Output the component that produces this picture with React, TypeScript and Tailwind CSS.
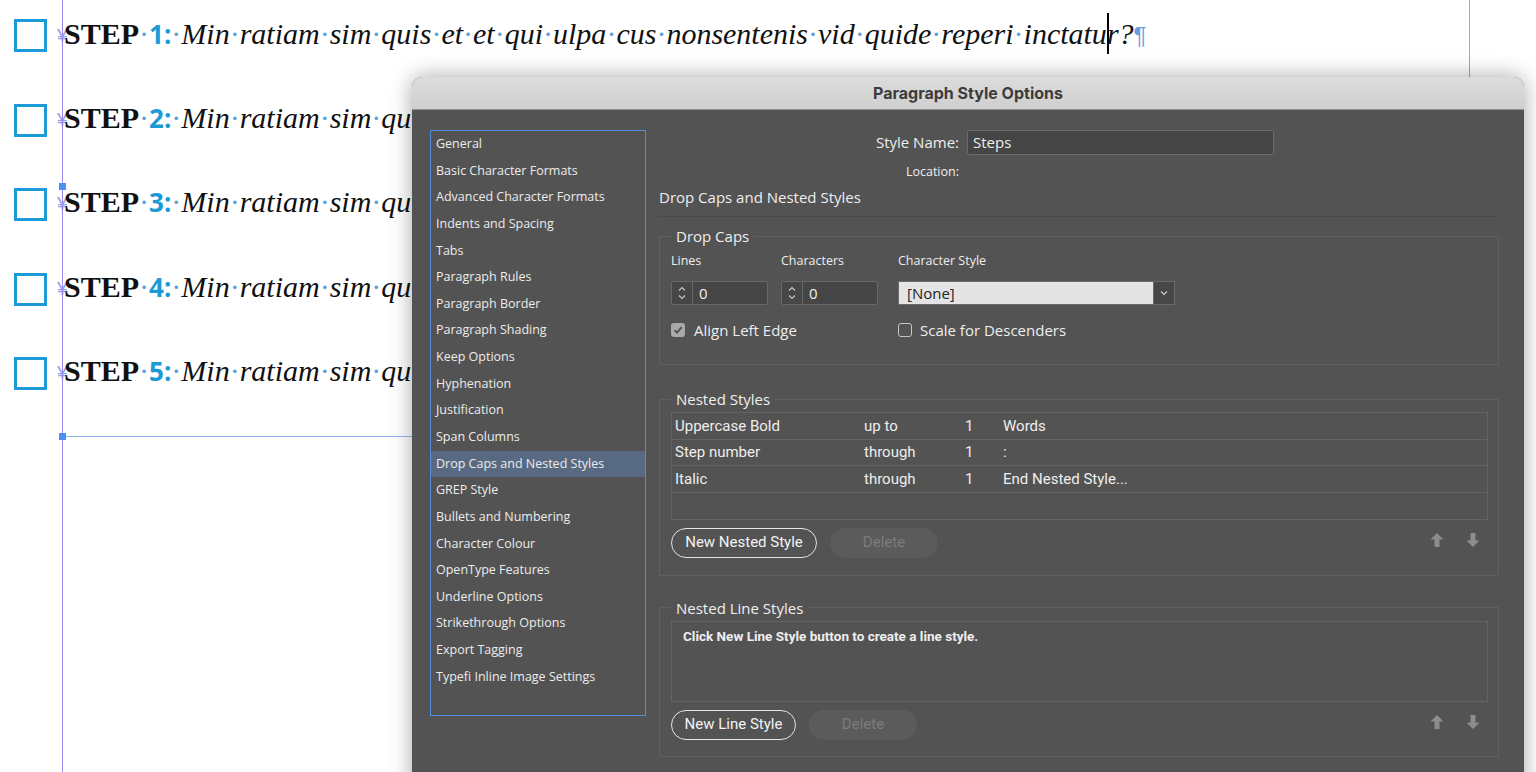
import React from "react"

const sections = [
  "General",
  "Basic Character Formats",
  "Advanced Character Formats",
  "Indents and Spacing",
  "Tabs",
  "Paragraph Rules",
  "Paragraph Border",
  "Paragraph Shading",
  "Keep Options",
  "Hyphenation",
  "Justification",
  "Span Columns",
  "Drop Caps and Nested Styles",
  "GREP Style",
  "Bullets and Numbering",
  "Character Colour",
  "OpenType Features",
  "Underline Options",
  "Strikethrough Options",
  "Export Tagging",
  "Typefi Inline Image Settings",
]

const nestedStyles = [
  { style: "Uppercase Bold", mode: "up to", count: "1", until: "Words" },
  { style: "Step number", mode: "through", count: "1", until: ":" },
  { style: "Italic", mode: "through", count: "1", until: "End Nested Style..." },
]

const words = "Min ratiam sim quis et et qui ulpa cus nonsentenis vid quide reperi".split(" ")

function Dot() {
  return <span className="font-normal not-italic text-[#5b9fdc]">·</span>
}

// rows under the dialog only show their first words
function StepRow({ n, full }: { n: number; full?: boolean }) {
  const shown = full ? words : words.slice(0, 3)
  return (
    <div className="flex items-center h-[40px]">
      <div className="ml-[14px] mt-[3px] w-[33px] h-[33px] border-[3px] border-[#1d9ad8] shrink-0" />
      <div className="ml-[10px] whitespace-nowrap font-['Liberation_Serif',serif] text-[30px] leading-[40px] text-[#111]">
        <span className="inline-block w-[7px] overflow-visible font-['Liberation_Sans',sans-serif] text-[19px] text-[#8d9fe6] align-[2px]">¥</span>
        <span className="font-bold">STEP</span>
        <Dot />
        <span className="font-['Open_Sans',sans-serif] font-bold text-[26px] text-[#1b9ad6]">{n}:</span>
        <Dot />
        <span className="italic">
          {shown.map((w, i) => (
            <React.Fragment key={i}>
              {w}
              <Dot />
            </React.Fragment>
          ))}
          {full ? (
            <>
              inctatu
              <span className="inline-block w-[2px] h-[41px] -mr-[2px] bg-black align-[-10px]" />
              r?
            </>
          ) : (
            "quis"
          )}
        </span>
        {full && <span className="font-['Liberation_Sans',sans-serif] text-[24px] text-[#6d9be0]">¶</span>}
      </div>
    </div>
  )
}

function Group({ title, className, children }: { title: string; className?: string; children: React.ReactNode }) {
  return (
    <fieldset className={`border border-[#5f5f5f] pl-[11px] pr-[10px] ${className ?? ""}`}>
      <legend className="px-[5px] text-[15px] leading-[20px] text-[#efefef]">{title}</legend>
      {children}
    </fieldset>
  )
}

function Spinner() {
  return (
    <div className="flex w-[97px] h-[24px] border border-[#686868] bg-[#464646] rounded-[2px]">
      <div className="w-[21px] flex items-center justify-center border-r border-[#686868]">
        <svg width="10" height="18" viewBox="0 0 10 18" fill="none" stroke="#c4c4c4" strokeWidth="1.2">
          <path d="M2 6.5 L5 3.5 L8 6.5" />
          <path d="M2 11.5 L5 14.5 L8 11.5" />
        </svg>
      </div>
      <div className="pl-[6px] text-[15px] leading-[22px] text-[#f0f0f0]">0</div>
    </div>
  )
}

function Arrows() {
  return (
    <div className="ml-auto mt-[5px] mr-[8px] flex gap-[22px]">
      <svg width="14" height="14" viewBox="0 0 14 14" fill="#8d8d8d">
        <polygon points="7,0 13.5,6.5 9.5,6.5 9.5,14 4.5,14 4.5,6.5 0.5,6.5" />
      </svg>
      <svg width="14" height="14" viewBox="0 0 14 14" fill="#8d8d8d">
        <polygon points="7,14 13.5,7.5 9.5,7.5 9.5,0 4.5,0 4.5,7.5 0.5,7.5" />
      </svg>
    </div>
  )
}

function PillButtons({ label, width }: { label: string; width: string }) {
  return (
    <div className="flex items-start mt-[8px]">
      <button className={`${width} h-[30px] rounded-full border-[1.5px] border-[#e4e4e4] text-[15px] text-[#f2f2f2] font-['Roboto',sans-serif]`}>
        {label}
      </button>
      <button className="ml-[13px] w-[108px] h-[30px] rounded-full bg-[#5b5b5b] text-[15px] text-[#7c7c7c] font-['Roboto',sans-serif]">
        Delete
      </button>
      <Arrows />
    </div>
  )
}

export default function App() {
  return (
    <div className="relative w-[1536px] h-[772px] overflow-hidden bg-white">
      {/* document page */}
      <div className="flex flex-col pt-[14px] gap-[44.5px]">
        {[1, 2, 3, 4, 5].map((n) => (
          <StepRow key={n} n={n} full={n === 1} />
        ))}
      </div>

      {/* guides */}
      <div className="absolute left-[62px] top-0 w-px h-full bg-[#9a86f0]" />
      <div className="absolute left-[1469px] top-0 w-px h-full bg-[#a898f2]" />
      <div className="absolute left-[62px] top-[436px] w-[1407px] h-px bg-[#8fb6f5]" />
      <div className="absolute left-[59px] top-[183px] w-[7px] h-[7px] bg-[#4f8ff2]" />
      <div className="absolute left-[59px] top-[433px] w-[7px] h-[7px] bg-[#4f8ff2]" />

      {/* dialog */}
      <div className="absolute left-[412px] top-[77px] w-[1112px] h-[720px] rounded-t-[10px] bg-[#535353] shadow-[0_0_22px_rgba(0,0,0,0.35)] font-['Open_Sans',sans-serif]">
        <div className="h-[33px] rounded-t-[10px] bg-gradient-to-b from-[#dcdcdc] to-[#cfcfcf] border-b border-[#8e8e8e] flex items-center justify-center">
          <span className="font-['Inter',sans-serif] font-bold text-[16px] text-[#3c3c3c]">Paragraph Style Options</span>
        </div>

        <div className="flex pl-[18px] pt-[20px] gap-[13px]">
          {/* section list */}
          <div className="w-[216px] h-[586px] border border-[#4d8fdc] shrink-0">
            {sections.map((s) => (
              <div
                key={s}
                className={`h-[26.65px] pl-[5px] flex items-center text-[12.5px] text-[#ececec] ${
                  s === "Drop Caps and Nested Styles" ? "bg-[#586a82]" : ""
                }`}
              >
                {s}
              </div>
            ))}
          </div>

          {/* options panel */}
          <div className="w-[840px] flex flex-col text-[#eeeeee]">
            <div className="flex items-center h-[25px]">
              <div className="w-[300px] text-right text-[15px]">Style Name:</div>
              <div className="ml-[8px] w-[307px] h-[25px] border border-[#6b6b6b] bg-[#454545] rounded-[2px] pl-[5px] text-[15px] leading-[23px]">
                Steps
              </div>
            </div>
            <div className="flex items-center h-[20px] mt-[7px]">
              <div className="w-[300px] text-right text-[12.5px]">Location:</div>
            </div>
            <div className="h-[20px] mt-[5px] text-[15px] leading-[20px]">Drop Caps and Nested Styles</div>
            <div className="h-px mt-[9px] bg-[#4a4a4a]" />

            <Group title="Drop Caps" className="mt-[9px] pb-[24px]">
              <div className="flex mt-[7px] h-[16px] items-center text-[12.5px]">
                <div className="w-[110px]">Lines</div>
                <div className="w-[117px]">Characters</div>
                <div>Character Style</div>
              </div>
              <div className="flex mt-[12px]">
                <Spinner />
                <div className="ml-[13px]">
                  <Spinner />
                </div>
                <div className="ml-[20px] flex w-[277px] h-[24px] border border-[#6b6b6b]">
                  <div className="flex-1 bg-[#e4e4e4] pl-[8px] text-[15px] leading-[22px] text-[#222]">[None]</div>
                  <div className="w-[21px] bg-[#474747] flex items-center justify-center border-l border-[#6b6b6b]">
                    <svg width="10" height="8" viewBox="0 0 10 8" fill="none" stroke="#cfcfcf" strokeWidth="1.2">
                      <path d="M2 2.5 L5 5.5 L8 2.5" />
                    </svg>
                  </div>
                </div>
              </div>
              <div className="flex mt-[15px] h-[20px] items-center text-[15px]">
                <div className="w-[227px] flex items-center">
                  <div className="w-[14px] h-[14px] rounded-[3px] bg-[#a9a9a9] flex items-center justify-center">
                    <svg width="10" height="10" viewBox="0 0 10 10" fill="none" stroke="#505050" strokeWidth="1.8">
                      <path d="M1.5 5.2 L4 7.6 L8.6 2.2" />
                    </svg>
                  </div>
                  <span className="ml-[9px]">Align Left Edge</span>
                </div>
                <div className="flex items-center">
                  <div className="w-[14px] h-[14px] rounded-[3px] border border-[#c6c6c6]" />
                  <span className="ml-[8px]">Scale for Descenders</span>
                </div>
              </div>
            </Group>

            <Group title="Nested Styles" className="mt-[24px] pb-[17px]">
              <div className="mt-[3px] border border-[#646464] font-['Roboto',sans-serif] text-[15px]">
                {nestedStyles.map((r) => (
                  <div key={r.style} className="flex items-center h-[26.5px] border-b border-[#646464] pl-[3px]">
                    <div className="w-[189px]">{r.style}</div>
                    <div className="w-[101px]">{r.mode}</div>
                    <div className="w-[38px]">{r.count}</div>
                    <div>{r.until}</div>
                  </div>
                ))}
                <div className="h-[26px]" />
              </div>
              <PillButtons label="New Nested Style" width="w-[146px]" />
            </Group>

            <Group title="Nested Line Styles" className="mt-[22px] pb-[16px]">
              <div className="mt-[3px] h-[81px] border border-[#646464] pl-[11px] pt-[6px] font-['Roboto',sans-serif] font-bold text-[13.5px] leading-[16px]">
                Click New Line Style button to create a line style.
              </div>
              <PillButtons label="New Line Style" width="w-[125px]" />
            </Group>
          </div>
        </div>
      </div>
    </div>
  )
}
